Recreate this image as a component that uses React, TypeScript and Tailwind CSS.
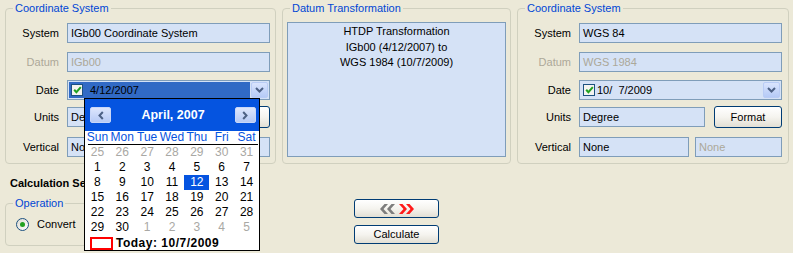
import React from "react";

const Field = ({
  className = "",
  disabled = false,
  children,
}: {
  className?: string;
  disabled?: boolean;
  children?: React.ReactNode;
}) => (
  <div
    className={`h-[20px] border border-[#7F9DB9] bg-[#D5E2F6] pl-[3px] flex items-center whitespace-nowrap overflow-hidden ${
      disabled ? "text-[#ACA899]" : "text-black"
    } ${className}`}
  >
    {children}
  </div>
);

const Row = ({
  label,
  disabled = false,
  className = "",
  children,
}: {
  label: string;
  disabled?: boolean;
  className?: string;
  children?: React.ReactNode;
}) => (
  <div className={`flex items-center h-[20px] ${className}`}>
    <div className={`w-[53px] text-right mr-[8px] ${disabled ? "text-[#ACA899]" : "text-black"}`}>{label}</div>
    {children}
  </div>
);

const DropBtn = () => (
  <div className="w-[17px] h-[16px] rounded-[2px] border border-[#B9CCF5] bg-linear-to-b from-[#D9E4FD] to-[#B5CAF6] flex items-center justify-center shrink-0">
    <svg width="9" height="6" viewBox="0 0 9 6">
      <path d="M1 1 L4.5 4.5 L8 1" stroke="#4D6185" strokeWidth="2" fill="none" />
    </svg>
  </div>
);

const Check = () => (
  <div className="w-[12px] h-[12px] border border-[#1C5180] bg-[#F4F4F0] flex items-center justify-center shrink-0">
    <svg width="9" height="8" viewBox="0 0 9 8">
      <path d="M1.2 3.8 L3.4 6.2 L7.8 1.2" stroke="#21A121" strokeWidth="2" fill="none" />
    </svg>
  </div>
);

const XPButton = ({ className = "", children }: { className?: string; children?: React.ReactNode }) => (
  <div
    className={`border border-[#003C74] rounded-[3px] bg-linear-to-b from-[#FFFFFF] via-[#F5F4EF] to-[#E2DFD4] flex items-center justify-center text-black ${className}`}
  >
    {children}
  </div>
);

const Group = ({
  title,
  className = "",
  children,
}: {
  title: string;
  className?: string;
  children?: React.ReactNode;
}) => (
  <div className={`relative border border-[#D0D0BF] rounded-[4px] ${className}`}>
    <span className="absolute -top-[7px] left-[7px] px-[2px] bg-[#ECE9D8] text-[#0046D5] leading-[13px] whitespace-nowrap">
      {title}
    </span>
    {children}
  </div>
);

const CoordGroup = ({
  className,
  system,
  datum,
  dateActive,
  date,
  units,
}: {
  className: string;
  system: string;
  datum: string;
  dateActive: boolean;
  date: string;
  units: string;
}) => (
  <Group title="Coordinate System" className={`${className} h-[156px] pt-[14px]`}>
    <Row label="System">
      <Field className="w-[203px]">{system}</Field>
    </Row>
    <Row label="Datum" disabled className="mt-[9px]">
      <Field className="w-[203px]" disabled>
        {datum}
      </Field>
    </Row>
    <Row label="Date" className="mt-[8px]">
      <div className="w-[203px] h-[20px] border border-[#7F9DB9] bg-[#D5E2F6] flex items-center p-[1px] gap-[1px]">
        {dateActive ? (
          <div className="flex-1 h-full bg-[#316AC5] flex items-center pl-[2px]">
            <Check />
            <span className="ml-[7px]">{date}</span>
          </div>
        ) : (
          <div className="flex-1 h-full flex items-center pl-[2px]">
            <Check />
            <span className="ml-[2px] whitespace-pre">{date}</span>
          </div>
        )}
        <DropBtn />
      </div>
    </Row>
    <Row label="Units" className="mt-[7px]">
      <Field className="w-[126px]">{units}</Field>
      <XPButton className="ml-[9px] w-[68px] h-[22px] shrink-0">Format</XPButton>
    </Row>
    <Row label="Vertical" className="mt-[10px]">
      <Field className="w-[110px]">None</Field>
      <Field className="w-[87px] ml-[6px]" disabled>
        None
      </Field>
    </Row>
  </Group>
);

const Radio = ({ checked = false }: { checked?: boolean }) => (
  <div className="w-[13px] h-[13px] rounded-full border border-[#1C5180] bg-linear-to-br from-[#DCDBD2] to-[#FFFFFF] flex items-center justify-center shrink-0">
    {checked && <div className="w-[5px] h-[5px] rounded-full bg-[#21A121]" />}
  </div>
);

type Day = { d: number; grey?: boolean; sel?: boolean };

const weeks: Day[][] = [
  [25, 26, 27, 28, 29, 30, 31].map((d) => ({ d, grey: true })),
  [1, 2, 3, 4, 5, 6, 7].map((d) => ({ d })),
  [8, 9, 10, 11, 12, 13, 14].map((d) => ({ d, sel: d === 12 })),
  [15, 16, 17, 18, 19, 20, 21].map((d) => ({ d })),
  [22, 23, 24, 25, 26, 27, 28].map((d) => ({ d })),
  [
    { d: 29 },
    { d: 30 },
    { d: 1, grey: true },
    { d: 2, grey: true },
    { d: 3, grey: true },
    { d: 4, grey: true },
    { d: 5, grey: true },
  ],
];

const NavBtn = ({ dir }: { dir: "l" | "r" }) => (
  <div className="w-[21px] h-[16px] rounded-[2px] border border-[#C9D7F8] bg-linear-to-b from-[#DDE6FD] to-[#B7CAF5] flex items-center justify-center">
    <svg width="6" height="9" viewBox="0 0 6 9">
      <path
        d={dir === "l" ? "M4.8 1 L1.5 4.5 L4.8 8" : "M1.2 1 L4.5 4.5 L1.2 8"}
        stroke="#4D6185"
        strokeWidth="2"
        fill="none"
      />
    </svg>
  </div>
);

const Calendar = () => (
  <div className="absolute left-[84px] top-[98px] w-[176px] h-[153px] border border-black bg-white text-[12px] leading-[15px] overflow-hidden">
    <div className="h-[32px] bg-[#0554E0] flex items-center justify-between pl-[5px] pr-[3px]">
      <NavBtn dir="l" />
      <span className="text-white font-bold text-[12.5px]">April, 2007</span>
      <NavBtn dir="r" />
    </div>
    <div className="grid grid-cols-7 h-[13px] text-[#0554E0] leading-[13px] text-center">
      {["Sun", "Mon", "Tue", "Wed", "Thu", "Fri", "Sat"].map((n) => (
        <div key={n}>{n}</div>
      ))}
    </div>
    <div className="h-[1px] bg-black ml-[3px] mr-[1px]" />
    {weeks.map((w, i) => (
      <div key={i} className="grid grid-cols-7 h-[15px] text-center">
        {w.map((c, j) => (
          <div
            key={j}
            className={c.sel ? "bg-[#0554E0] text-white" : c.grey ? "text-[#A9A8A4]" : "text-black"}
          >
            {c.d}
          </div>
        ))}
      </div>
    ))}
    <div className="flex items-end h-[15px] pl-[5px]">
      <div className="w-[23px] h-[13px] border-2 border-[#FF0000] shrink-0" />
      <span className="ml-[3px] font-bold tracking-[0.5px] text-black leading-[13px]">
        Today: 10/7/2009
      </span>
    </div>
  </div>
);

export default function App() {
  return (
    <div className="relative w-[793px] h-[253px] overflow-hidden bg-[#ECE9D8] text-[11px] leading-[13px] text-black font-['Liberation_Sans',Arial,sans-serif]">
      <div className="flex pl-[5px] pt-[8px] gap-[6px]">
        <CoordGroup
          className="w-[271px]"
          system="IGb00 Coordinate System"
          datum="IGb00"
          dateActive
          date="4/12/2007"
          units="Degree"
        />
        <Group title="Datum Transformation" className="w-[229px] h-[156px] pt-[13px] pl-[4px]">
          <div className="w-[219px] h-[135px] border border-[#7F9DB9] bg-[#D5E2F6] text-center leading-[15.5px] pt-[1px]">
            <div>HTDP Transformation</div>
            <div>IGb00 (4/12/2007) to</div>
            <div>WGS 1984 (10/7/2009)</div>
          </div>
        </Group>
        <CoordGroup
          className="w-[272px]"
          system="WGS 84"
          datum="WGS 1984"
          dateActive={false}
          date="10/  7/2009"
          units="Degree"
        />
      </div>
      <div className="flex pl-[5px] gap-[6px]">
        <div className="w-[271px] flex flex-col">
          <div className="mt-[13px] pl-[5px] font-bold whitespace-nowrap">Calculation Settings</div>
          <Group title="Operation" className="mt-[13px] w-[240px] h-[43px] flex items-center pl-[10px]">
            <Radio checked />
            <span className="ml-[8px]">Convert</span>
            <div className="ml-[11px]">
              <Radio />
            </div>
          </Group>
        </div>
        <div className="w-[229px] flex flex-col items-center pt-[35px]">
          <XPButton className="w-[85px] h-[19px]">
            <svg width="36" height="10" viewBox="0 0 36 10">
              <polygon points="5.5,0 9,0 4.5,5 9,10 5.5,10 1,5" fill="#7D7D7D" />
              <polygon points="12.5,0 16,0 11.5,5 16,10 12.5,10 8,5" fill="#7D7D7D" />
              <polygon points="20,0 23.5,0 28,5 23.5,10 20,10 24.5,5" fill="#FF1A1A" />
              <polygon points="27,0 30.5,0 35,5 30.5,10 27,10 31.5,5" fill="#FF1A1A" />
            </svg>
          </XPButton>
          <XPButton className="w-[85px] h-[19px] mt-[7px]">Calculate</XPButton>
        </div>
      </div>
      <Calendar />
    </div>
  );
}
